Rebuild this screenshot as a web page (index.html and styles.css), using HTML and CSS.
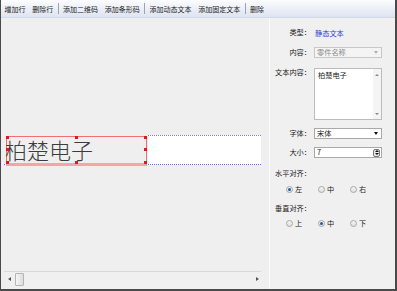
FILE: index.html
```html
<!DOCTYPE html>
<html>
<head>
<meta charset="utf-8">
<link rel="stylesheet" href="styles.css">
</head>
<body>
<div class="app">
  <div class="toolbar">
    <span class="tb-item">增加行</span>
    <span class="tb-item">删除行</span>
    <span class="tb-sep"></span>
    <span class="tb-item">添加二维码</span>
    <span class="tb-item">添加条形码</span>
    <span class="tb-sep"></span>
    <span class="tb-item">添加动态文本</span>
    <span class="tb-item">添加固定文本</span>
    <span class="tb-sep"></span>
    <span class="tb-item">删除</span>
  </div>
  <div class="main">
    <div class="canvas">
      <div class="stage">
        <div class="row-strip">
          <div class="elem">
            <span class="elem-text">柏楚电子</span>
            <i class="h h-tl"></i><i class="h h-tm"></i><i class="h h-tr"></i>
            <i class="h h-ml"></i><i class="h h-mr"></i>
            <i class="h h-bl"></i><i class="h h-bm"></i><i class="h h-br"></i>
          </div>
        </div>
      </div>
      <div class="hscroll">
        <span class="arr arr-l"></span>
        <span class="thumb"></span>
        <span class="track"></span>
        <span class="arr arr-r"></span>
      </div>
    </div>
    <div class="panel">
      <div class="prow r-type">
        <span class="lbl">类型：</span>
        <span class="type-val">静态文本</span>
      </div>
      <div class="prow r-content">
        <span class="lbl">内容：</span>
        <div class="select disabled"><span>零件名称</span><span class="dd dd-gray"></span></div>
      </div>
      <div class="prow r-text">
        <span class="lbl lbl-top">文本内容：</span>
        <div class="textarea">
          <span class="ta-text">柏楚电子</span>
          <div class="vscroll"><span class="va va-up"></span><span class="va va-down"></span></div>
        </div>
      </div>
      <div class="prow r-font">
        <span class="lbl">字体：</span>
        <div class="select"><span>宋体</span><span class="dd"></span></div>
      </div>
      <div class="prow r-size">
        <span class="lbl">大小：</span>
        <div class="spin"><span>7</span><span class="spin-btn"><i class="sp-up"></i><i class="sp-dn"></i></span></div>
      </div>
      <div class="sec r-h">水平对齐：</div>
      <div class="radios r-hr">
        <label class="radio on"><i></i>左</label>
        <label class="radio"><i></i>中</label>
        <label class="radio"><i></i>右</label>
      </div>
      <div class="sec r-v">垂直对齐：</div>
      <div class="radios r-vr">
        <label class="radio"><i></i>上</label>
        <label class="radio on"><i></i>中</label>
        <label class="radio"><i></i>下</label>
      </div>
    </div>
  </div>
</div>
</body>
</html>
```
FILE: styles.css
```css
* { box-sizing: border-box; }
html, body { margin: 0; padding: 0; background: #fff; }
body {
  font-family: "Noto Sans CJK SC", "Noto Sans", sans-serif;
  font-size: 7.2px;
  color: #1a1a1a;
}
.app {
  width: 397px;
  height: 291px;
  border-left: 1px solid #4a4a4a;
  border-right: 2px solid #4a4a4a;
  border-bottom: 2px solid #4a4a4a;
  display: flex;
  flex-direction: column;
  overflow: hidden;
}
.toolbar {
  height: 18px;
  flex: none;
  display: flex;
  align-items: center;
  padding-left: 0;
  font-size: 7px;
  background: linear-gradient(#fbfcfe, #e9edf6 60%, #dfe4f1);
  border-bottom: 1px solid #d4d9e6;
}
.tb-item {
  padding: 0 3.4px;
  line-height: 12px;
  color: #222;
  white-space: nowrap;
}
.tb-sep {
  width: 1px;
  height: 11px;
  background: #9aa2b4;
  margin: 0 1px;
}
.main {
  flex: 1;
  display: flex;
  min-height: 0;
}
.canvas {
  width: 268px;
  flex: none;
  background: #efefef;
  display: flex;
  flex-direction: column;
}
.stage {
  flex: 1;
  padding: 117px 0 0 3px;
}
.row-strip {
  position: relative;
  width: 257px;
  height: 30px;
  background: #fff;
  border-top: 1px dotted #7b7cf0;
  border-bottom: 1px dotted #6a6cf0;
}
.elem {
  position: absolute;
  left: 0;
  top: -1px;
  width: 144px;
  height: 29px;
  background: #efefef;
}
.elem::before {
  content: "";
  position: absolute;
  left: 2px;
  top: 1px;
  width: 139px;
  height: 26px;
  border: 1px solid #f07070;
  border-bottom: 3px solid #f4a6a6;
}
.elem-text {
  position: absolute;
  left: 1px;
  top: -1px;
  font-size: 22px;
  line-height: 30px;
  font-weight: 300;
  color: #3c3c3c;
}
.h {
  position: absolute;
  width: 3px;
  height: 3px;
  background: #e8141c;
}
.h-tl { left: 1.5px; top: 0.5px; }
.h-tm { left: 70.5px; top: 0.5px; }
.h-tr { left: 139.5px; top: 0.5px; }
.h-ml { left: 1.5px; top: 12.5px; }
.h-mr { left: 139.5px; top: 12.5px; }
.h-bl { left: 1.5px; top: 25.5px; }
.h-bm { left: 70.5px; top: 25.5px; }
.h-br { left: 139.5px; top: 25.5px; }

.hscroll {
  flex: none;
  height: 18px;
  margin: 0 8px 0 3px;
  border-top: 1px solid #d9d9d9;
  display: flex;
  align-items: center;
  padding: 0 2px 3px 4px;
  background: #f0f0f0;
}
.arr {
  width: 0; height: 0;
  border-top: 2.5px solid transparent;
  border-bottom: 2.5px solid transparent;
}
.arr-l { border-right: 3px solid #555; }
.arr-r { border-left: 3px solid #555; }
.thumb {
  width: 9px;
  height: 13px;
  margin-left: 4px;
  border: 1px solid #b5b5b5;
  border-radius: 1px;
  background: linear-gradient(90deg, #f6f6f6, #dcdcdc);
}
.track { flex: 1; }

.panel {
  flex: 1;
  background: #f0f0f0;
  border-left: 1px solid #fbfbfb;
  padding-top: 9px;
  display: flex;
  flex-direction: column;
}
.prow {
  display: grid;
  grid-template-columns: 41px 68px;
  column-gap: 3px;
  align-items: center;
}
.lbl {
  text-align: right;
  white-space: nowrap;
  line-height: 9px;
}
.lbl-top { align-self: start; }
.r-type { height: 11px; }
.type-val { color: #2b3fd8; padding-left: 1px; }
.r-content { margin-top: 9px; height: 11px; }
.select {
  height: 11px;
  background: #fff;
  border: 1px solid #a9a9a9;
  display: flex;
  align-items: center;
  justify-content: space-between;
  padding: 0 3px 0 2px;
  line-height: 9px;
}
.select.disabled {
  background: #f4f4f4;
  border-color: #c8c8c8;
  color: #8a8a8a;
}
.dd {
  width: 0; height: 0;
  border-left: 2.5px solid transparent;
  border-right: 2.5px solid transparent;
  border-top: 3px solid #111;
}
.dd-gray { border-top-color: #b0b0b0; }
.r-text { margin-top: 10px; height: 52px; align-items: start; }
.textarea {
  height: 52px;
  background: #fff;
  border: 1px solid #bcbcbc;
  display: flex;
}
.ta-text {
  flex: 1;
  padding: 2px 0 0 3px;
  line-height: 9px;
}
.vscroll {
  width: 8px;
  background: #f4f4f4;
  display: flex;
  flex-direction: column;
  justify-content: space-between;
  align-items: center;
  padding: 5px 0 4px;
}
.va { width: 0; height: 0; border-left: 2px solid transparent; border-right: 2px solid transparent; }
.va-up { border-bottom: 2px solid #888; }
.va-down { border-top: 2px solid #888; }
.r-font { margin-top: 8px; height: 11px; }
.r-size { margin-top: 8px; height: 11px; }
.spin {
  height: 11px;
  background: #fff;
  border: 1px solid #a9a9a9;
  display: flex;
  align-items: center;
  justify-content: space-between;
  padding: 0 1px 0 2px;
  line-height: 9px;
}
.spin-btn {
  width: 7px;
  height: 8px;
  border: 1px solid #777;
  border-radius: 2px;
  background: #e6e6e6;
  display: flex;
  flex-direction: column;
  align-items: center;
  justify-content: space-around;
}
.sp-up { width: 0; height: 0; border-left: 2px solid transparent; border-right: 2px solid transparent; border-bottom: 2px solid #111; }
.sp-dn { width: 0; height: 0; border-left: 2px solid transparent; border-right: 2px solid transparent; border-top: 2px solid #111; }
.sec {
  padding-left: 5px;
  line-height: 10px;
  height: 10px;
}
.r-h { margin-top: 10px; }
.r-v { margin-top: 9px; }
.radios {
  display: flex;
  height: 10px;
  padding-left: 16px;
}
.r-hr { margin-top: 6px; }
.r-vr { margin-top: 5px; }
.radio {
  width: 32px;
  display: flex;
  align-items: center;
  gap: 2px;
  line-height: 10px;
}
.radio i {
  width: 7px;
  height: 7px;
  border-radius: 50%;
  border: 1px solid #a8a8a8;
  background: linear-gradient(#f4f4f4, #e0e0e0);
  display: flex;
  align-items: center;
  justify-content: center;
}
.radio.on i::after {
  content: "";
  width: 3px;
  height: 3px;
  border-radius: 50%;
  background: #1a5fa8;
}
```
